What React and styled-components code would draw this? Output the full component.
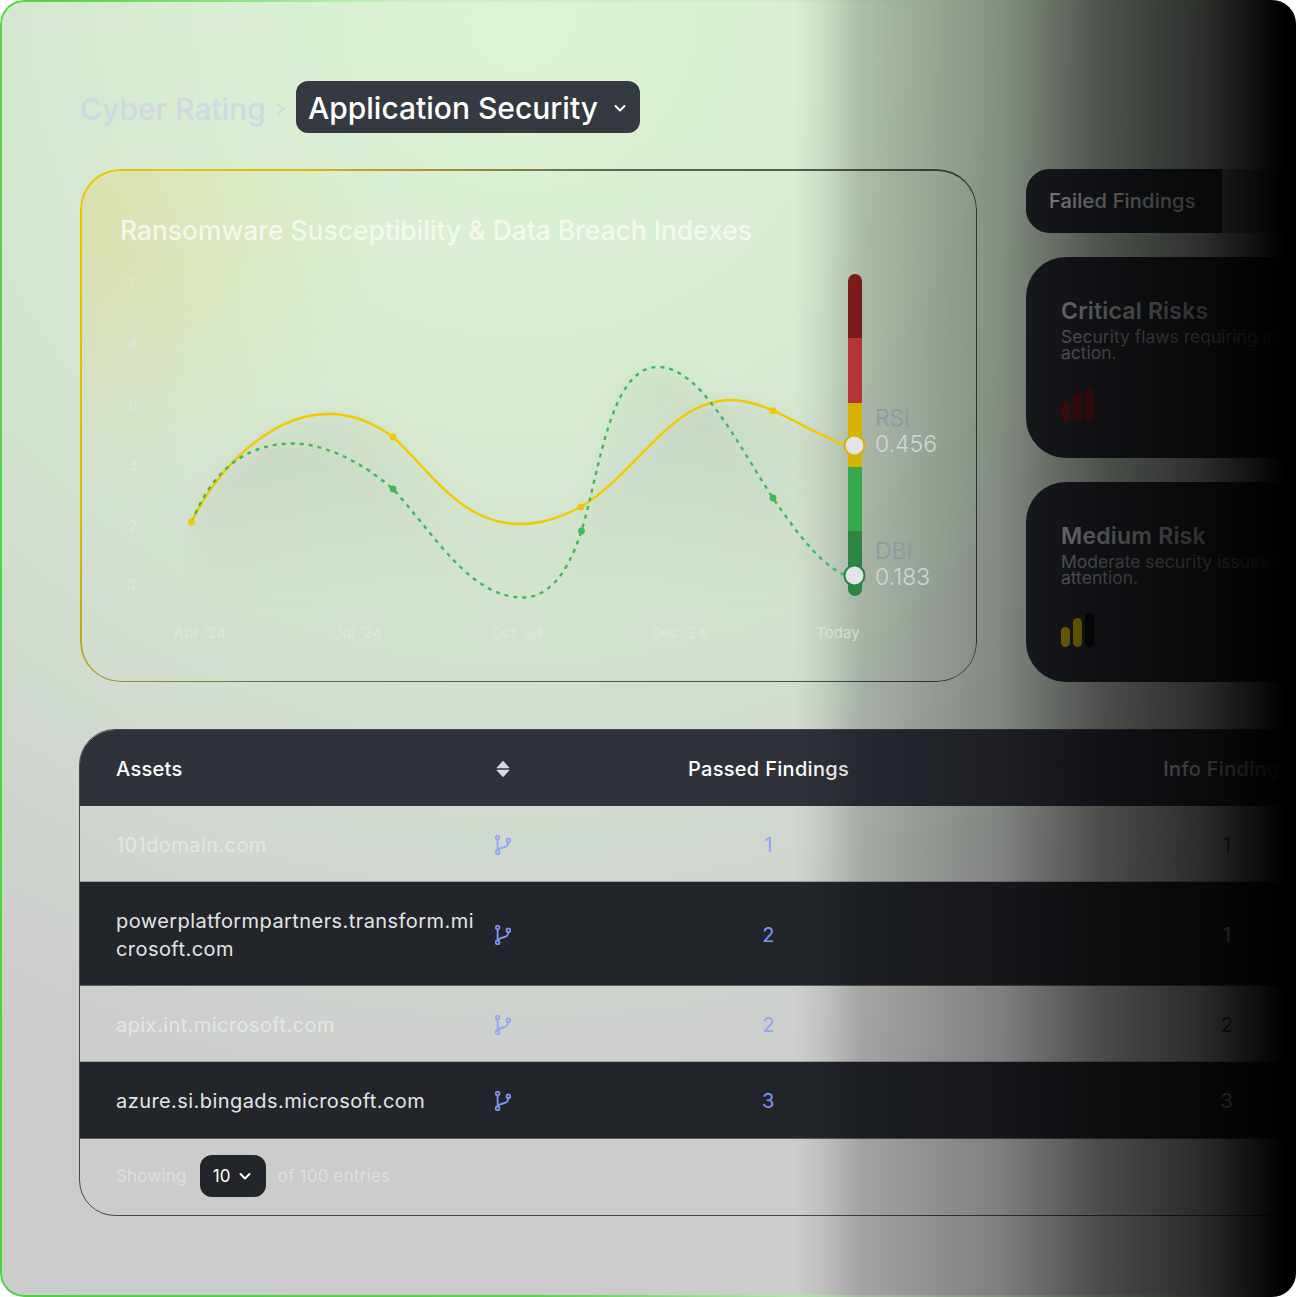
import React from "react";
import styled, { createGlobalStyle } from "styled-components";

const Global = createGlobalStyle`
  html, body { margin: 0; padding: 0; background: #fff; }
  * { box-sizing: border-box; }
  body { font-family: "Inter", "Noto Sans", sans-serif; }
`;

const Frame = styled.div`
  position: relative;
  width: 1296px;
  height: 1297px;
  padding: 81px 0 0 80px;
  overflow: hidden;
  border-radius: 24px;
  background:
    radial-gradient(ellipse 1150px 1120px at 520px 20px, #dcf4d4 0%, #d8ecd2 32%, #d2dfd0 62%, rgba(204, 204, 204, 0) 100%),
    #cccccc;

  &::before {
    content: "";
    position: absolute;
    inset: 0;
    border-radius: 24px;
    padding: 2px;
    background: linear-gradient(70deg, #48d63a 0%, #52d843 30%, #cdeec6 50%, #cdeec6 100%);
    mask: linear-gradient(#000 0 0) content-box exclude, linear-gradient(#000 0 0);
    pointer-events: none;
  }

  &::after {
    content: "";
    position: absolute;
    inset: 0;
    z-index: 5;
    pointer-events: none;
    background: linear-gradient(
      90deg,
      rgba(0, 0, 0, 0) 795px,
      rgba(0, 0, 0, 0.07) 825px,
      rgba(0, 0, 0, 0.2) 860px,
      rgba(0, 0, 0, 0.38) 1000px,
      rgba(0, 0, 0, 0.63) 1100px,
      rgba(0, 0, 0, 0.79) 1200px,
      #000 1285px
    );
  }
`;

const Breadcrumb = styled.div`
  display: flex;
  align-items: center;
  height: 52px;
`;

const Crumb = styled.span`
  padding-top: 4px;
  font-size: 30px;
  font-weight: 500;
  color: #d3d7e3;
`;

const Sep = styled.span`
  display: flex;
  margin: 4px 8px 0 8px;
  color: #d3d7e3;
`;

const Pill = styled.div`
  display: flex;
  align-items: center;
  justify-content: space-between;
  width: 344px;
  height: 52px;
  padding: 2px 12px 0;
  border-radius: 12px;
  background: #353941;
  color: #fff;
  font-size: 30px;
  font-weight: 500;
`;

const TopRow = styled.div`
  display: flex;
  gap: 49px;
  margin-top: 36px;
`;

const ChartCard = styled.section`
  position: relative;
  flex: none;
  width: 897px;
  height: 513px;
  padding-top: 41px;
  border-radius: 40px;
  background: radial-gradient(ellipse 300px 270px at 0 50px, rgba(232, 208, 90, 0.3), rgba(232, 208, 90, 0) 100%);

  &::before {
    content: "";
    position: absolute;
    inset: 0;
    border-radius: 40px;
    padding: 1.5px;
    background: linear-gradient(122deg, #ecc800 0%, #d8bb10 18%, #5f6258 44%, #3c4048 100%);
    mask: linear-gradient(#000 0 0) content-box exclude, linear-gradient(#000 0 0);
    pointer-events: none;
  }
`;

const ChartTitle = styled.h2`
  margin: 0 0 0 40px;
  font-size: 26.4px;
  line-height: 40px;
  font-weight: 500;
  color: #f5f8ec;
`;

/* sits above the page fade: the gauge and its readings stay bright in the picture */
const ChartSvg = styled.svg`
  position: relative;
  z-index: 6;
  display: block;
  font-family: "Inter", sans-serif;
`;

const Side = styled.aside`
  display: flex;
  flex: none;
  flex-direction: column;
  gap: 24px;
  width: 400px;
`;

const Tabs = styled.div`
  display: flex;
  height: 64px;
  border-radius: 24px 0 0 24px;
  background: #8f9092;
  overflow: hidden;
`;

const Tab = styled.div`
  display: flex;
  align-items: center;
  width: 196px;
  padding-left: 23px;
  background: #272b32;
  color: #eceef0;
  font-size: 20px;
  font-weight: 500;
  letter-spacing: 0.2px;
`;

const RiskCard = styled.article`
  display: flex;
  flex-direction: column;
  height: ${(p) => p.$h}px;
  padding: 40px 35px;
  border-radius: 40px;
  background: #272b32;
`;

const RiskTitle = styled.h3`
  margin: 0;
  font-size: 23px;
  line-height: 28px;
  font-weight: 600;
  letter-spacing: 0.2px;
  color: #d4d6da;
`;

const RiskText = styled.p`
  width: 320px;
  margin: 4px 0 0;
  font-size: 17.5px;
  line-height: 16px;
  font-weight: 400;
  color: #a8abb0;
`;

const Bars = styled.div`
  display: flex;
  align-items: flex-end;
  gap: 3px;
  height: 34px;
  margin-top: 27px;
`;

const Bar = styled.span`
  width: 9px;
  height: ${(p) => p.$h}px;
  border-radius: 5px;
  background: ${(p) => p.$c};
`;

const Table = styled.section`
  width: 1360px;
  height: 487px;
  margin: 47px 0 0 -1px;
  overflow: hidden;
  border: 1px solid #45484d;
  border-radius: 36px;
`;

const Row = styled.div`
  display: grid;
  grid-template-columns: 405px 36px 495px 422px;
  align-items: center;
  height: ${(p) => p.$h}px;
  padding-top: 2px;
  border-bottom: 1px solid rgba(130, 134, 130, 0.6);
  background: ${(p) => p.$bg || "transparent"};
  color: ${(p) => (p.$bg ? "#e2e5e8" : "#e3e8e4")};
  font-size: 20px;
  line-height: 28px;
  font-weight: 400;
  letter-spacing: 0.43px;
`;

const Head = styled(Row)`
  border-bottom: 0;
  color: #fff;
  font-weight: 500;
  letter-spacing: 0.3px;
`;

const Name = styled.div`
  width: 401px;
  padding-left: 36px;
  word-break: break-all;
`;

const Cell = styled.div`
  display: flex;
  justify-content: center;
  color: ${(p) => p.$c || "inherit"};
`;

const InfoCell = styled(Cell)`
  color: ${(p) => (p.$dim ? "#3c3f44" : "inherit")};
`;

const Footer = styled.div`
  display: flex;
  align-items: center;
  height: 74px;
  padding-left: 36px;
  font-size: 17px;
  letter-spacing: 0.2px;
  color: #dbe2da;
`;

const PageSelect = styled.div`
  display: flex;
  align-items: center;
  justify-content: center;
  gap: 6px;
  width: 66px;
  height: 42px;
  margin: 0 12px 0 13px;
  border-radius: 12px;
  background: #22252a;
  color: #fff;
`;

const Chevron = ({ size = 16, width = 2 }) => (
  <svg width={size} height={size} viewBox="0 0 16 16" fill="none" stroke="currentColor" strokeWidth={width} strokeLinecap="round" strokeLinejoin="round">
    <path d="M3.5 6l4.5 4.5L12.5 6" />
  </svg>
);

const ChevronRight = () => (
  <svg width="14" height="16" viewBox="0 0 14 16" fill="none" stroke="currentColor" strokeWidth="2" strokeLinecap="round" strokeLinejoin="round">
    <path d="M4 3l5.5 5L4 13" />
  </svg>
);

const Branch = ({ light }) => (
  <svg width="16" height="20" viewBox="0 0 16 20" fill="none" stroke={light ? "#8ea4f8" : "#7f98f8"} strokeWidth="1.8">
    <circle cx="2.6" cy="2.6" r="1.9" />
    <circle cx="13.4" cy="5.2" r="1.9" />
    <circle cx="2.6" cy="17.4" r="1.9" />
    <path d="M2.6 4.5v11M13.4 7.1c0 3.6-2.6 5-5.4 5.4-2.2.3-3.8.9-4.6 2.3" />
  </svg>
);

const Sort = () => (
  <svg width="14" height="18" viewBox="0 0 14 18" fill="#d9dbdd">
    <path d="M7 .8 13.2 7.4a.5.5 0 0 1-.4.8H1.2a.5.5 0 0 1-.4-.8zM7 17.2.8 10.6a.5.5 0 0 1 .4-.8h11.6a.5.5 0 0 1 .4.8z" />
  </svg>
);

const yellowPath = "M191.5 522C225 455 280 413 330 414C355 414 375 424 393 437C430 470 460 524 520 524C545 524 565 515 581 507C640 470 670 400 732 400C745 400 760 405 773 410.7C800 423 825 438 845 445";
const greenPath = "M191.5 522C215 465 250 443 295 443.5C330 445 365 465 393 489C435 535 470 597 522 597.5C555 598 572 560 581.5 531C600 470 610 367 658 367C700 367 735 440 773 498C795 530 820 565 845 575";

const yLabels = [["1", 284], [".8", 345], [".6", 405], [".4", 467], [".2", 526], ["0", 585]];
const xLabels = [["Apr '24", 200], ["Jul '24", 358], ["Oct '24", 517], ["Dec '24", 679], ["Today", 838]];
const segments = [
  ["#7a1a1a", 281, 57],
  ["#b23636", 338, 65],
  ["#d6b300", 403, 64],
  ["#36a84e", 467, 64],
  ["#2c8540", 531, 58],
];

const Chart = () => (
  <ChartSvg width="897" height="432" viewBox="80 250 897 432">
    <defs>
      <linearGradient id="area" x1="0" y1="0" x2="0" y2="1">
        <stop offset="0" stopColor="#a9b3a0" stopOpacity="0.2" />
        <stop offset="1" stopColor="#a9b3a0" stopOpacity="0" />
      </linearGradient>
      <filter id="soft" x="-10%" y="-10%" width="120%" height="120%">
        <feGaussianBlur stdDeviation="9" />
      </filter>
    </defs>
    {yLabels.map(([t, y]) => (
      <text key={t} x="131" y={y + 5} fontSize="14" textAnchor="middle" fill="#e6e9ec" fillOpacity="0.7">{t}</text>
    ))}
    {xLabels.map(([t, x]) => (
      <text key={t} x={x} y="638" fontSize="15" textAnchor="middle" fill="#e4e8e6" fillOpacity="0.75">{t}</text>
    ))}
    <g filter="url(#soft)">
      <path d={`${greenPath}V600H210Z`} fill="url(#area)" />
      <path d={`${yellowPath}V600H210Z`} fill="url(#area)" />
    </g>
    <path d={yellowPath} fill="none" stroke="#f2c900" strokeWidth="2.4" />
    <path d={greenPath} fill="none" stroke="#3dba55" strokeWidth="2.4" strokeDasharray="4 5" />
    {[[393, 489], [581.5, 531], [773, 498]].map(([x, y]) => (
      <circle key={x} cx={x} cy={y} r="3.4" fill="#3dba55" />
    ))}
    {[[191.5, 522], [393, 437], [581, 507], [773, 410.7]].map(([x, y]) => (
      <circle key={x} cx={x} cy={y} r="3.4" fill="#f2c900" />
    ))}
    <rect x="848" y="274" width="14" height="20" rx="7" fill="#7a1a1a" />
    <rect x="848" y="576" width="14" height="20" rx="7" fill="#2c8540" />
    {segments.map(([c, y, h]) => (
      <rect key={c} x="848" y={y} width="14" height={h} fill={c} />
    ))}
    <circle cx="854.5" cy="445.5" r="10" fill="#e2e4e8" stroke="#d6b300" strokeWidth="2" />
    <circle cx="854.5" cy="575.5" r="10" fill="#e2e4e8" stroke="#2c8540" strokeWidth="2" />
    <text x="875" y="426" fontSize="23" fontWeight="300" fill="#8f95a0">RSI</text>
    <text x="875" y="452" fontSize="23" fontWeight="300" fill="#d2d5da">0.456</text>
    <text x="875" y="559" fontSize="23" fontWeight="300" fill="#8f95a0">DBI</text>
    <text x="875" y="585" fontSize="23" fontWeight="300" fill="#d2d5da">0.183</text>
  </ChartSvg>
);

const risks = [
  { title: "Critical Risks", text: "Security flaws requiring immediate action.", h: 201, bars: ["#781818", "#781818", "#781818"] },
  { title: "Medium Risk", text: "Moderate security issues needing attention.", h: 200, bars: ["#dcb800", "#dcb800", "#0c0c0e"] },
];
const barHeights = [20, 29, 34];

const rows = [
  { name: "101domain.com", passed: 1, info: 1, h: 76 },
  { name: "powerplatformpartners.transform.microsoft.com", passed: 2, info: 1, h: 104, bg: "#22252a" },
  { name: "apix.int.microsoft.com", passed: 2, info: 2, h: 76 },
  { name: "azure.si.bingads.microsoft.com", passed: 3, info: 3, h: 77, bg: "#22252a" },
];

export default function App() {
  return (
    <>
      <Global />
      <Frame>
        <Breadcrumb>
          <Crumb>Cyber Rating</Crumb>
          <Sep><ChevronRight /></Sep>
          <Pill>
            Application Security
            <Chevron size={16} />
          </Pill>
        </Breadcrumb>

        <TopRow>
          <ChartCard>
            <ChartTitle>Ransomware Susceptibility &amp; Data Breach Indexes</ChartTitle>
            <Chart />
          </ChartCard>
          <Side>
            <Tabs>
              <Tab>Failed Findings</Tab>
            </Tabs>
            {risks.map((r) => (
              <RiskCard key={r.title} $h={r.h}>
                <RiskTitle>{r.title}</RiskTitle>
                <RiskText>{r.text}</RiskText>
                <Bars>
                  {r.bars.map((c, i) => <Bar key={i} $c={c} $h={barHeights[i]} />)}
                </Bars>
              </RiskCard>
            ))}
          </Side>
        </TopRow>

        <Table>
          <Head $h={76} $bg="#2f323b">
            <Name>Assets</Name>
            <Cell><Sort /></Cell>
            <Cell>Passed Findings</Cell>
            <Cell>Info Findings</Cell>
          </Head>
          {rows.map((r) => (
            <Row key={r.name} $h={r.h} $bg={r.bg}>
              <Name>{r.name}</Name>
              <Cell><Branch light={!r.bg} /></Cell>
              <Cell $c={r.bg ? "#7f98f8" : "#8ea4f8"}>{r.passed}</Cell>
              <InfoCell $dim={!r.bg}>{r.info}</InfoCell>
            </Row>
          ))}
          <Footer>
            Showing
            <PageSelect>10 <Chevron size={16} /></PageSelect>
            of 100 entries
          </Footer>
        </Table>
      </Frame>
    </>
  );
}
